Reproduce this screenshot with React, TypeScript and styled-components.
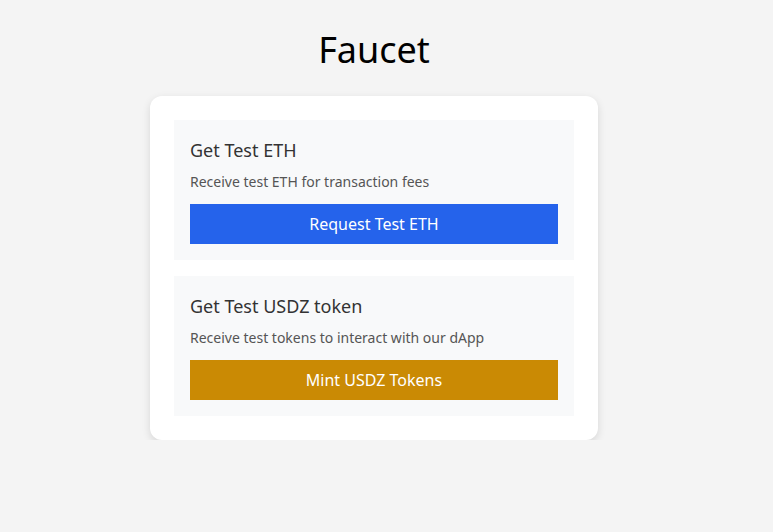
import React from 'react';
import styled, { createGlobalStyle } from 'styled-components';

const GlobalStyle = createGlobalStyle`
  body {
    margin: 0;
    background: #f4f4f4;
    font-family: "Noto Sans", "Open Sans", sans-serif;
  }
`;

const faucets = [
  {
    title: 'Get Test ETH',
    text: 'Receive test ETH for transaction fees',
    action: 'Request Test ETH',
    color: '#2563eb',
  },
  {
    title: 'Get Test USDZ token',
    text: 'Receive test tokens to interact with our dApp',
    action: 'Mint USDZ Tokens',
    color: '#ca8a04',
  },
];

const App = () => {
  return (
    <Page>
      <GlobalStyle />
      <Title>Faucet</Title>
      <Card>
        {faucets.map((f) => (
          <Section key={f.title}>
            <SectionTitle>{f.title}</SectionTitle>
            <SectionText>{f.text}</SectionText>
            <ActionButton $color={f.color}>{f.action}</ActionButton>
          </Section>
        ))}
      </Card>
    </Page>
  );
};

export default App;

const Page = styled.div`
  width: 748px;
  display: flex;
  flex-direction: column;
  align-items: center;
  padding-top: 24px;
`;

const Title = styled.h1`
  margin: 0 0 20px;
  font-size: 36px;
  font-weight: 400;
  line-height: 52px;
  color: #000;
`;

const Card = styled.div`
  width: 448px;
  box-sizing: border-box;
  padding: 24px;
  background: #fff;
  border-radius: 12px;
  box-shadow: 0 3px 8px rgba(0, 0, 0, 0.12);
  display: flex;
  flex-direction: column;
  gap: 16px;
`;

const Section = styled.div`
  background: #f8f9fa;
  padding: 16px;
  display: flex;
  flex-direction: column;
`;

const SectionTitle = styled.h3`
  margin: 0 0 8px;
  font-size: 18px;
  font-weight: 400;
  line-height: 28px;
  color: #333;
`;

const SectionText = styled.p`
  margin: 0 0 12px;
  font-size: 14px;
  line-height: 20px;
  color: #555;
`;

const ActionButton = styled.button<{ $color: string }>`
  height: 40px;
  border: none;
  background: ${(p) => p.$color};
  color: #fff;
  font-family: inherit;
  font-size: 16px;
  cursor: pointer;
`;
